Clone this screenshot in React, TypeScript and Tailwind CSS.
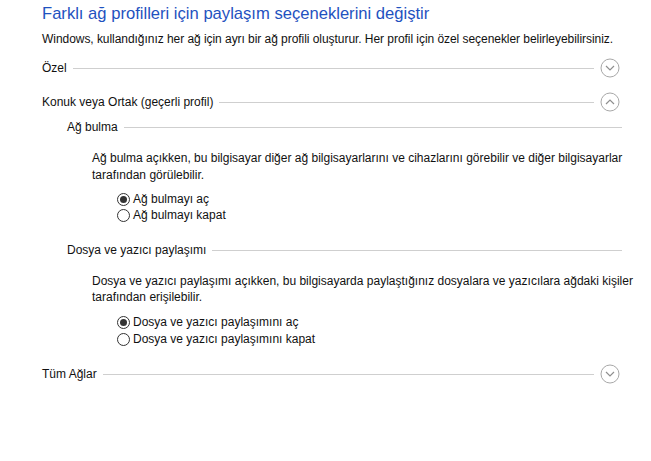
import React from "react";

const Chevron = ({ up }: { up?: boolean }) => (
  <svg width="20" height="20" viewBox="0 0 20 20" className="shrink-0">
    <circle cx="10" cy="10" r="9" fill="none" stroke="#a8a8a8" strokeWidth="1" />
    {up ? (
      <path d="M6 12 L10 8 L14 12" fill="none" stroke="#8f8f8f" strokeWidth="1.2" />
    ) : (
      <path d="M6 8 L10 12 L14 8" fill="none" stroke="#8f8f8f" strokeWidth="1.2" />
    )}
  </svg>
);

const Radio = ({ checked, label }: { checked?: boolean; label: string }) => (
  <label className="flex items-center h-[16px] gap-[3px]">
    <span className="w-[13px] h-[13px] rounded-full border border-[#333] flex items-center justify-center bg-white">
      {checked && <span className="w-[7px] h-[7px] rounded-full bg-[#333]" />}
    </span>
    <span>{label}</span>
  </label>
);

const Header = ({ text, chevron, up }: { text: string; chevron?: boolean; up?: boolean }) => (
  <div className="flex items-center h-[16px]">
    <span className="whitespace-nowrap">{text}</span>
    <div className="flex-1 h-px bg-[#cfcfcf] ml-[6px]" />
    {chevron && (
      <div className="ml-[6px]">
        <Chevron up={up} />
      </div>
    )}
  </div>
);

export default function App() {
  return (
    <div className="w-[651px] h-[461px] bg-white text-[12px] text-[#111] font-['Liberation_Sans',sans-serif] leading-[16px]">
      <div className="pl-[42px] w-[622px] pt-[3px]">
        <h1 className="text-[16.6px] leading-[22px] text-[#1f52c0] whitespace-nowrap">
          Farklı ağ profilleri için paylaşım seçeneklerini değiştir
        </h1>
        <p className="mt-[6px] whitespace-nowrap tracking-[-0.05px]">
          Windows, kullandığınız her ağ için ayrı bir ağ profili oluşturur. Her profil için özel seçenekler belirleyebilirsiniz.
        </p>
        <div className="mt-[13px] pr-[2px]">
          <Header text="Özel" chevron />
        </div>
        <div className="mt-[18px] pr-[2px]">
          <Header text="Konuk veya Ortak (geçerli profil)" chevron up />
        </div>
        <div className="pl-[25px] mt-[9px]">
          <Header text="Ağ bulma" />
          <div className="pl-[25px] mt-[15px]">
            <p className="leading-[17px] whitespace-nowrap">
              Ağ bulma açıkken, bu bilgisayar diğer ağ bilgisayarlarını ve cihazlarını görebilir ve diğer bilgisayarlar
              <br />
              tarafından görülebilir.
            </p>
            <div className="pl-[25px] mt-[7px]">
              <Radio checked label="Ağ bulmayı aç" />
              <Radio label="Ağ bulmayı kapat" />
            </div>
          </div>
          <div className="mt-[19px]">
            <Header text="Dosya ve yazıcı paylaşımı" />
          </div>
          <div className="pl-[25px] mt-[15px]">
            <p className="leading-[16px] whitespace-nowrap">
              Dosya ve yazıcı paylaşımı açıkken, bu bilgisayarda paylaştığınız dosyalara ve yazıcılara ağdaki kişiler
              <br />
              tarafından erişilebilir.
            </p>
            <div className="pl-[25px] mt-[9px]">
              <Radio checked label="Dosya ve yazıcı paylaşımını aç" />
              <div className="mt-px">
                <Radio label="Dosya ve yazıcı paylaşımını kapat" />
              </div>
            </div>
          </div>
        </div>
        <div className="mt-[19px] pr-[2px]">
          <Header text="Tüm Ağlar" chevron />
        </div>
      </div>
    </div>
  );
}
